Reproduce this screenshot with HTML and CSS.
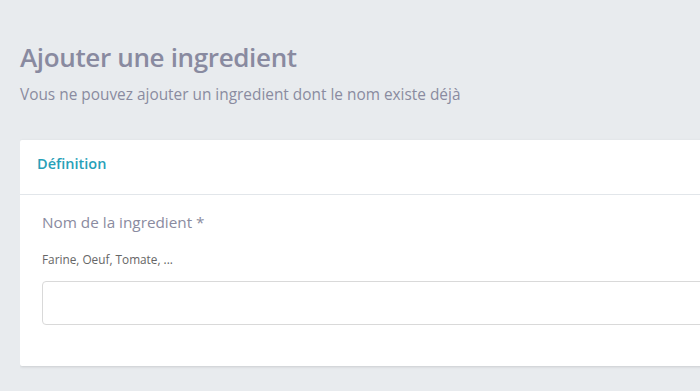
FILE: index.html
```html
<!DOCTYPE html>
<html lang="fr">
<head>
<meta charset="utf-8">
<title>Ajouter une ingredient</title>
<link rel="stylesheet" href="styles.css">
</head>
<body>
<main class="page">
  <h1 class="title">Ajouter une ingredient</h1>
  <p class="subtitle">Vous ne pouvez ajouter un ingredient dont le nom existe déjà</p>
  <div class="card-clip">
    <section class="card">
      <header class="card-header">Définition</header>
      <div class="card-body">
        <label class="label" for="nom">Nom de la ingredient *</label>
        <div class="hint">Farine, Oeuf, Tomate, ...</div>
        <input class="input" id="nom" type="text">
      </div>
    </section>
  </div>
</main>
</body>
</html>
```

FILE: styles.css
```css
html, body {
  margin: 0;
  padding: 0;
  background: #e8ebee;
  overflow: hidden;
  font-family: "Open Sans", "Noto Sans", sans-serif;
}
.page {
  padding: 38px 0 0 20px;
}
.title {
  margin: 0;
  font-size: 26px;
  line-height: 38px;
  font-weight: 600;
  color: #898aa0;
  letter-spacing: -0.35px;
}
.subtitle {
  margin: 8px 0 0;
  font-size: 15.4px;
  line-height: 22px;
  color: #8a8ba0;
}
.card-clip {
  margin-top: 30px;
  padding: 4px 0 6px;
  overflow: hidden;
}
.card {
  width: 740px;
  background: #fff;
  border-radius: 2px;
  box-shadow: 0 1px 3px rgba(0, 0, 0, 0.13);
}
.card-header {
  box-sizing: border-box;
  height: 55px;
  padding: 14px 17px 0;
  line-height: 20px;
  font-size: 14.5px;
  font-weight: 600;
  color: #27a0b8;
  border-bottom: 1px solid #e2e6ea;
}
.card-body {
  padding: 16px 22px 41px;
  display: flex;
  flex-direction: column;
}
.label {
  font-size: 15.3px;
  line-height: 22px;
  color: #8a8ba0;
}
.hint {
  margin-top: 18px;
  font-size: 11.8px;
  line-height: 16px;
  color: #666;
}
.input {
  margin-top: 14px;
  box-sizing: border-box;
  height: 44px;
  border: 1px solid #d9d9d9;
  border-radius: 4px;
  background: #fff;
  outline: none;
}
```
